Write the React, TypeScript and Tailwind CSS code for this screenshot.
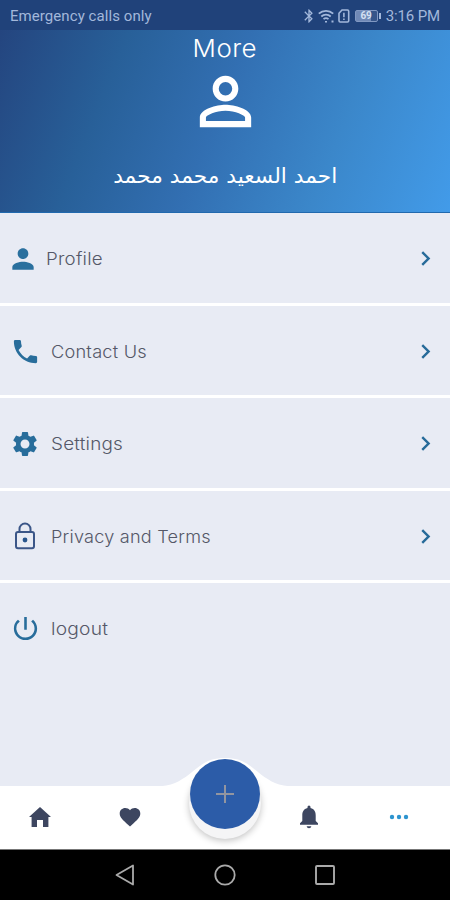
import type { ReactNode } from "react";
import { MdBluetooth, MdChevronRight, MdPerson, MdPersonOutline, MdPhone, MdPowerSettingsNew, MdSettings } from "react-icons/md";

function StatusBar() {
  return (
    <div className="flex h-[30px] items-center bg-[#20427a] pr-[10px] pl-[10px] font-[Roboto,sans-serif] text-[15px] text-[#a3b8db]">
      <span className="mt-[2px] tracking-[0.07px]">Emergency calls only</span>
      <div className="mt-[2px] ml-auto flex items-center">
        <MdBluetooth className="mr-px size-4" />
        <svg width="17" height="14" viewBox="0 0 17 14" fill="none" stroke="currentColor" strokeWidth="1.8">
          <path d="M.8 4.7a10.5 10.5 0 0 1 14.4 0M3.3 7.5a7 7 0 0 1 9.4 0M5.5 10.1a4 4 0 0 1 5 0" />
          <path d="M7 12h2v1.5H7zM13.5 11.5h2v2h-2z" fill="currentColor" stroke="none" />
        </svg>
        <svg className="ml-[3px]" width="12" height="14" viewBox="0 0 12 14" fill="none" stroke="currentColor" strokeWidth="1.6">
          <path d="M1 4.2 4 1h5.5q1.2 0 1.2 1.2v9.6q0 1.2-1.2 1.2H2.2Q1 13 1 11.8ZM5.9 3.8v4.4M5.9 9.5v1.6" />
        </svg>
        <div className="ml-[5px] flex h-[12px] w-[23px] items-center justify-center rounded-[2px] border border-[#8198c2] bg-[linear-gradient(90deg,#7089b6_70%,#36558a_70%)] text-[10px] leading-none font-bold text-[#d5e0f2]">69</div>
        <div className="mr-[5px] ml-px h-[6px] w-[2px] bg-[#a3b8db]" />
        <span className="tracking-[-0.12px]">3:16 PM</span>
      </div>
    </div>
  );
}

interface RowProps {
  icon: ReactNode;
  label: string;
  stretch: string;
  gap?: string;
  last?: boolean;
}

function Row({ icon, label, stretch, gap = "w-[51px] pr-px", last = false }: RowProps) {
  return (
    <div className={`flex h-[92.5px] shrink-0 items-center border-b-[3px] pt-[2px] pr-[10px] ${last ? "border-transparent" : "border-white"}`}>
      <div className={`flex shrink-0 justify-center ${gap}`}>{icon}</div>
      <span className={`mt-[2px] origin-left font-[Inter,sans-serif] text-[17px] font-light tracking-[0.2px] whitespace-nowrap text-[#555868] ${stretch}`}>{label}</span>
      {!last && <MdChevronRight className="ml-auto size-[29px] text-[#276b99]" />}
    </div>
  );
}

function LockIcon() {
  return (
    <svg width="22" height="28" viewBox="0 0 22 28" fill="none" stroke="#3b5688" strokeWidth="2">
      <rect x="2" y="10" width="18" height="16.3" rx="2" />
      <path d="M5.5 10V7a5.5 5.5 0 0 1 11 0v3" />
      <circle cx="11" cy="18" r="2.4" fill="#28558d" stroke="none" />
    </svg>
  );
}

export default function App() {
  return (
    <div className="flex h-[900px] w-[450px] flex-col overflow-hidden bg-[#e8ebf4]">
      <StatusBar />
      <header className="flex h-[183px] shrink-0 flex-col items-center border-b border-[#2169ae] bg-[linear-gradient(112deg,#24457f_0%,#286099_25%,#326fb2_48%,#3b87ca_73%,#429be9_100%)] text-white">
        <h1 className="mt-[2px] scale-x-[1.08] font-[Inter,sans-serif] text-[24px] leading-[34px] font-light tracking-[0.4px]">More</h1>
        <MdPersonOutline className="mt-[-3px] size-[77px]" />
        <p dir="rtl" className="mt-[18px] scale-x-[1.035] font-['DejaVu_Sans',sans-serif] text-[21px] leading-[36px] whitespace-nowrap">احمد السعيد محمد محمد</p>
      </header>
      <main className="flex flex-1 flex-col">
        <Row icon={<MdPerson className="size-[32px] text-[#2a709e]" />} label="Profile" stretch="scale-x-[1.10]" gap="w-[46px]" />
        <Row icon={<MdPhone className="size-[31px] text-[#286d9b]" />} label="Contact Us" stretch="scale-x-[1.07]" />
        <Row icon={<MdSettings className="size-[30px] text-[#286d9b]" />} label="Settings" stretch="scale-x-[1.11]" />
        <Row icon={<LockIcon />} label="Privacy and Terms" stretch="scale-x-[1.065]" />
        <Row icon={<MdPowerSettingsNew className="size-[31px] text-[#286d9b]" />} label="logout" stretch="scale-x-[1.13]" last />
      </main>
      <nav className="relative grid h-[63.5px] shrink-0 grid-cols-5 items-center justify-items-center bg-white text-[#3d4660]">
        <svg className="absolute top-[-31px] left-[155px]" width="140" height="32" viewBox="0 0 140 32">
          <path d="M0 31.5C17 31.5 25 26 34 19.5 46 10 52 3 70 3s24 7 36 16.5c9 6.5 17 12 34 12Z" fill="white" />
        </svg>
        <svg className="relative left-[-5.5px]" width="22" height="22" viewBox="0 0 22 22" fill="currentColor">
          <path d="M11 1 22 11h-2.6v10h-5.4v-7H8v7H2.6V11H0Z" />
        </svg>
        <svg className="relative left-[-5.5px]" width="22" height="20" viewBox="0 0 22 20" fill="currentColor">
          <path d="M11 19.4 9.3 17.9C3.8 13 .7 10.3.7 6.5.7 3.3 3.2 1 6.2 1 8.1 1 9.9 1.9 11 3.3 12.1 1.9 13.9 1 15.8 1c3 0 5.5 2.3 5.5 5.5 0 3.8-3.1 6.5-8.6 11.4Z" />
        </svg>
        <button className="absolute top-[-26.5px] left-[190px] flex size-[70px] items-center justify-center rounded-full bg-[#2c5ca8] shadow-[0_9px_0_1px_#f5f5f6,0_11px_7px_1px_rgba(0,0,0,0.24)]">
          <svg width="20" height="20" viewBox="0 0 20 20" stroke="#9295a0" strokeWidth="2"><path d="M10 1v18M1 10h18" /></svg>
        </button>
        <svg className="relative left-[-6px] col-start-4" width="20" height="24" viewBox="0 0 20 24" fill="currentColor">
          <path d="M8.5 3V2q0-1.5 1.5-1.5T11.5 2v1c3.8.9 5.2 3.7 5.2 7.5V16l2.3 2.3v1.5H1v-1.5L3.3 16v-5.5c0-3.8 1.4-6.6 5.2-7.5ZM7.6 21.2h4.8q-.4 2-2.4 2t-2.4-2Z" />
        </svg>
        <svg className="relative left-[-6px]" width="20" height="6" viewBox="0 0 20 6" fill="#2e94cf">
          <circle cx="3" cy="3" r="2.2" /><circle cx="10" cy="3" r="2.2" /><circle cx="17" cy="3" r="2.2" />
        </svg>
      </nav>
      <footer className="flex h-[51px] shrink-0 items-center justify-center gap-[78px] border-t border-[#777] bg-black">
        <svg width="22" height="24" viewBox="0 0 22 24" fill="none" stroke="#aaa" strokeWidth="1.8" strokeLinejoin="round"><path d="M19 2.5v19L2.5 12Z" /></svg>
        <svg width="22" height="22" viewBox="0 0 22 22" fill="none" stroke="#aaa" strokeWidth="1.8"><circle cx="11" cy="11" r="9.7" /></svg>
        <svg width="22" height="22" viewBox="0 0 22 22" fill="none" stroke="#aaa" strokeWidth="1.9"><rect x="2" y="2" width="18" height="18" rx="1" /></svg>
      </footer>
    </div>
  );
}
